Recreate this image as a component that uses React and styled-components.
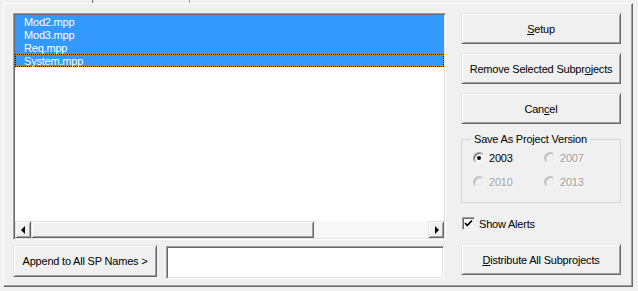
import styled, { createGlobalStyle, css } from "styled-components";

const GlobalStyle = createGlobalStyle`
  html, body {
    margin: 0;
    padding: 0;
    background: #f0f0f0;
  }
  body {
    font-family: "Liberation Sans", Arial, sans-serif;
    font-size: 11px;
    letter-spacing: -0.2px;
    color: #000;
  }
  * {
    box-sizing: border-box;
  }
`;

const raised = css`
  border: 1px solid;
  border-color: #e3e3e3 #696969 #696969 #e3e3e3;
  box-shadow: inset 1px 1px #fff, inset -1px -1px #a0a0a0;
  background: #f0f0f0;
`;

const sunken = css`
  border: 1px solid;
  border-color: #a0a0a0 #fff #fff #a0a0a0;
  box-shadow: inset 1px 1px #696969, inset -1px -1px #e3e3e3;
`;

const TabStrip = styled.div`
  height: 3px;
  display: flex;
  padding-left: 3px;
`;

const Tab = styled.div`
  width: ${(p) => p.$width}px;
  height: 3px;
  ${(p) =>
    p.$active
      ? css`
          border-left: 1px solid #fff;
        `
      : css`
          border-left: 1px solid #696969;
          border-right: 1px solid #a0a0a0;
        `}
`;

const Page = styled.div`
  margin-left: 3px;
  width: 630px;
  height: 284px;
  border-top: 1px solid #fff;
  border-left: 1px solid #fff;
  border-right: 1px solid #696969;
  border-bottom: 1px solid #696969;
  box-shadow: inset -1px -1px #a0a0a0;
  padding: 9px 0 0 9px;
  display: grid;
  grid-template-columns: 433px 160px;
  column-gap: 15px;
  align-items: start;
`;

const Column = styled.div`
  display: flex;
  flex-direction: column;
`;

const ListBox = styled.div`
  ${sunken};
  height: 227px;
  background: #fff;
  padding: 1px;
  display: flex;
  flex-direction: column;
`;

const Items = styled.div`
  flex: 1;
`;

const Item = styled.div`
  height: 13px;
  line-height: 13px;
  padding: 1px 0 0 9px;
  color: #fff;
  background: #3399ff;
  white-space: nowrap;
  ${(p) =>
    p.$focused &&
    css`
      padding: 0 0 0 8px;
      line-height: 12px;
      border: 1px dotted #000;
      background: linear-gradient(#3399ff, #3399ff) padding-box,
        linear-gradient(#e58a00, #e58a00) border-box;
    `}
`;

const ScrollBar = styled.div`
  height: 17px;
  display: flex;
`;

const ArrowButton = styled.div`
  ${raised};
  width: 16px;
  height: 17px;
  display: flex;
  align-items: center;
  justify-content: center;
`;

const Arrow = styled.span`
  width: 0;
  height: 0;
  border-top: 4px solid transparent;
  border-bottom: 4px solid transparent;
  ${(p) =>
    p.$dir === "left"
      ? css`
          border-right: 4px solid #000;
          margin-left: -1px;
        `
      : css`
          border-left: 4px solid #000;
          margin-left: 1px;
        `}
`;

const Thumb = styled.div`
  ${raised};
  width: 283px;
  height: 17px;
`;

const Track = styled.div`
  flex: 1;
  background-color: #f0f0f0;
  background-image: repeating-conic-gradient(#fff 0 25%, #f0f0f0 0 50%);
  background-size: 2px 2px;
`;

const BottomRow = styled.div`
  margin-top: 5px;
  display: flex;
  align-items: flex-start;
  gap: 9px;
`;

const Button = styled.button`
  ${raised};
  width: ${(p) => (p.$width ? `${p.$width}px` : "100%")};
  height: ${(p) => p.$height || 31}px;
  margin-top: ${(p) => p.$top || 0}px;
  padding: 0;
  font: inherit;
  letter-spacing: inherit;
  color: #000;
  display: flex;
  align-items: center;
  justify-content: center;
  white-space: nowrap;

  u {
    text-decoration: underline;
    text-underline-offset: 1px;
  }
`;

const TextBox = styled.div`
  ${sunken};
  width: 278px;
  height: 33px;
  margin-top: 1px;
  background: #fff;
`;

const Group = styled.fieldset`
  margin: 9px 0 0;
  padding: 0;
  border: 1px solid #d5d5d5;
  min-width: 0;
`;

const Legend = styled.legend`
  margin-left: 9px;
  padding: 0 3px;
  line-height: 13px;
`;

const RadioGrid = styled.div`
  display: grid;
  grid-template-columns: 71px 71px;
  grid-auto-rows: 24px;
  padding: 0 0 8px 11px;
`;

const RadioItem = styled.label`
  display: flex;
  align-items: center;
  gap: 4px;
  color: ${(p) => (p.$disabled ? "#a0a0a0" : "#000")};
  text-shadow: ${(p) => (p.$disabled ? "1px 1px #fff" : "none")};
`;

const RadioCircle = styled.span`
  position: relative;
  width: 12px;
  height: 12px;
  border-radius: 50%;
  border: 1px solid;
  border-color: ${(p) =>
    p.$disabled ? "#c8c8c8 #fff #fff #c8c8c8" : "#a0a0a0 #fff #fff #a0a0a0"};
  box-shadow: ${(p) =>
    p.$disabled
      ? "inset 1px 1px #b4b4b4, inset -1px -1px #e3e3e3"
      : "inset 1px 1px #696969, inset -1px -1px #e3e3e3"};
  background: ${(p) => (p.$disabled ? "#f0f0f0" : "#fff")};

  &::after {
    content: "";
    display: ${(p) => (p.$checked ? "block" : "none")};
    position: absolute;
    left: 3px;
    top: 3px;
    width: 4px;
    height: 4px;
    border-radius: 50%;
    background: #000;
  }
`;

const CheckRow = styled.label`
  margin: 14px 0 0 1px;
  height: 13px;
  display: flex;
  align-items: center;
  gap: 4px;
`;

const CheckBox = styled.span`
  ${sunken};
  width: 13px;
  height: 13px;
  background: #fff;
  display: flex;
  align-items: center;
  justify-content: center;
`;

const items = ["Mod2.mpp", "Mod3.mpp", "Req.mpp", "System.mpp"];

const versions = [
  { label: "2003", checked: true },
  { label: "2007", disabled: true },
  { label: "2010", disabled: true },
  { label: "2013", disabled: true },
];

export default function App() {
  return (
    <>
      <GlobalStyle />
      <TabStrip>
        <Tab $width={89} $active />
        <Tab $width={98} />
      </TabStrip>
      <Page>
        <Column>
          <ListBox>
            <Items>
              {items.map((name, i) => (
                <Item key={name} $focused={i === items.length - 1}>
                  {name}
                </Item>
              ))}
            </Items>
            <ScrollBar>
              <ArrowButton>
                <Arrow $dir="left" />
              </ArrowButton>
              <Thumb />
              <Track />
              <ArrowButton>
                <Arrow $dir="right" />
              </ArrowButton>
            </ScrollBar>
          </ListBox>
          <BottomRow>
            <Button $width={144} $height={32}>
              Append to All SP Names &gt;
            </Button>
            <TextBox />
          </BottomRow>
        </Column>
        <Column>
          <Button>
            <u>S</u>etup
          </Button>
          <Button $top={9}>
            Remove Selected Subpr<u>o</u>jects
          </Button>
          <Button $top={9}>
            Can<u>c</u>el
          </Button>
          <Group>
            <Legend>Save As Project Version</Legend>
            <RadioGrid>
              {versions.map((v) => (
                <RadioItem key={v.label} $disabled={v.disabled}>
                  <RadioCircle $checked={v.checked} $disabled={v.disabled} />
                  {v.label}
                </RadioItem>
              ))}
            </RadioGrid>
          </Group>
          <CheckRow>
            <CheckBox>
              <svg width="9" height="9" viewBox="0 0 9 9">
                <path d="M1 4 L3.3 6.5 L8 1.5" fill="none" stroke="#000" strokeWidth="1.8" />
              </svg>
            </CheckBox>
            Show Alerts
          </CheckRow>
          <Button $top={14}>
            <u>D</u>istribute All Subprojects
          </Button>
        </Column>
      </Page>
    </>
  );
}
